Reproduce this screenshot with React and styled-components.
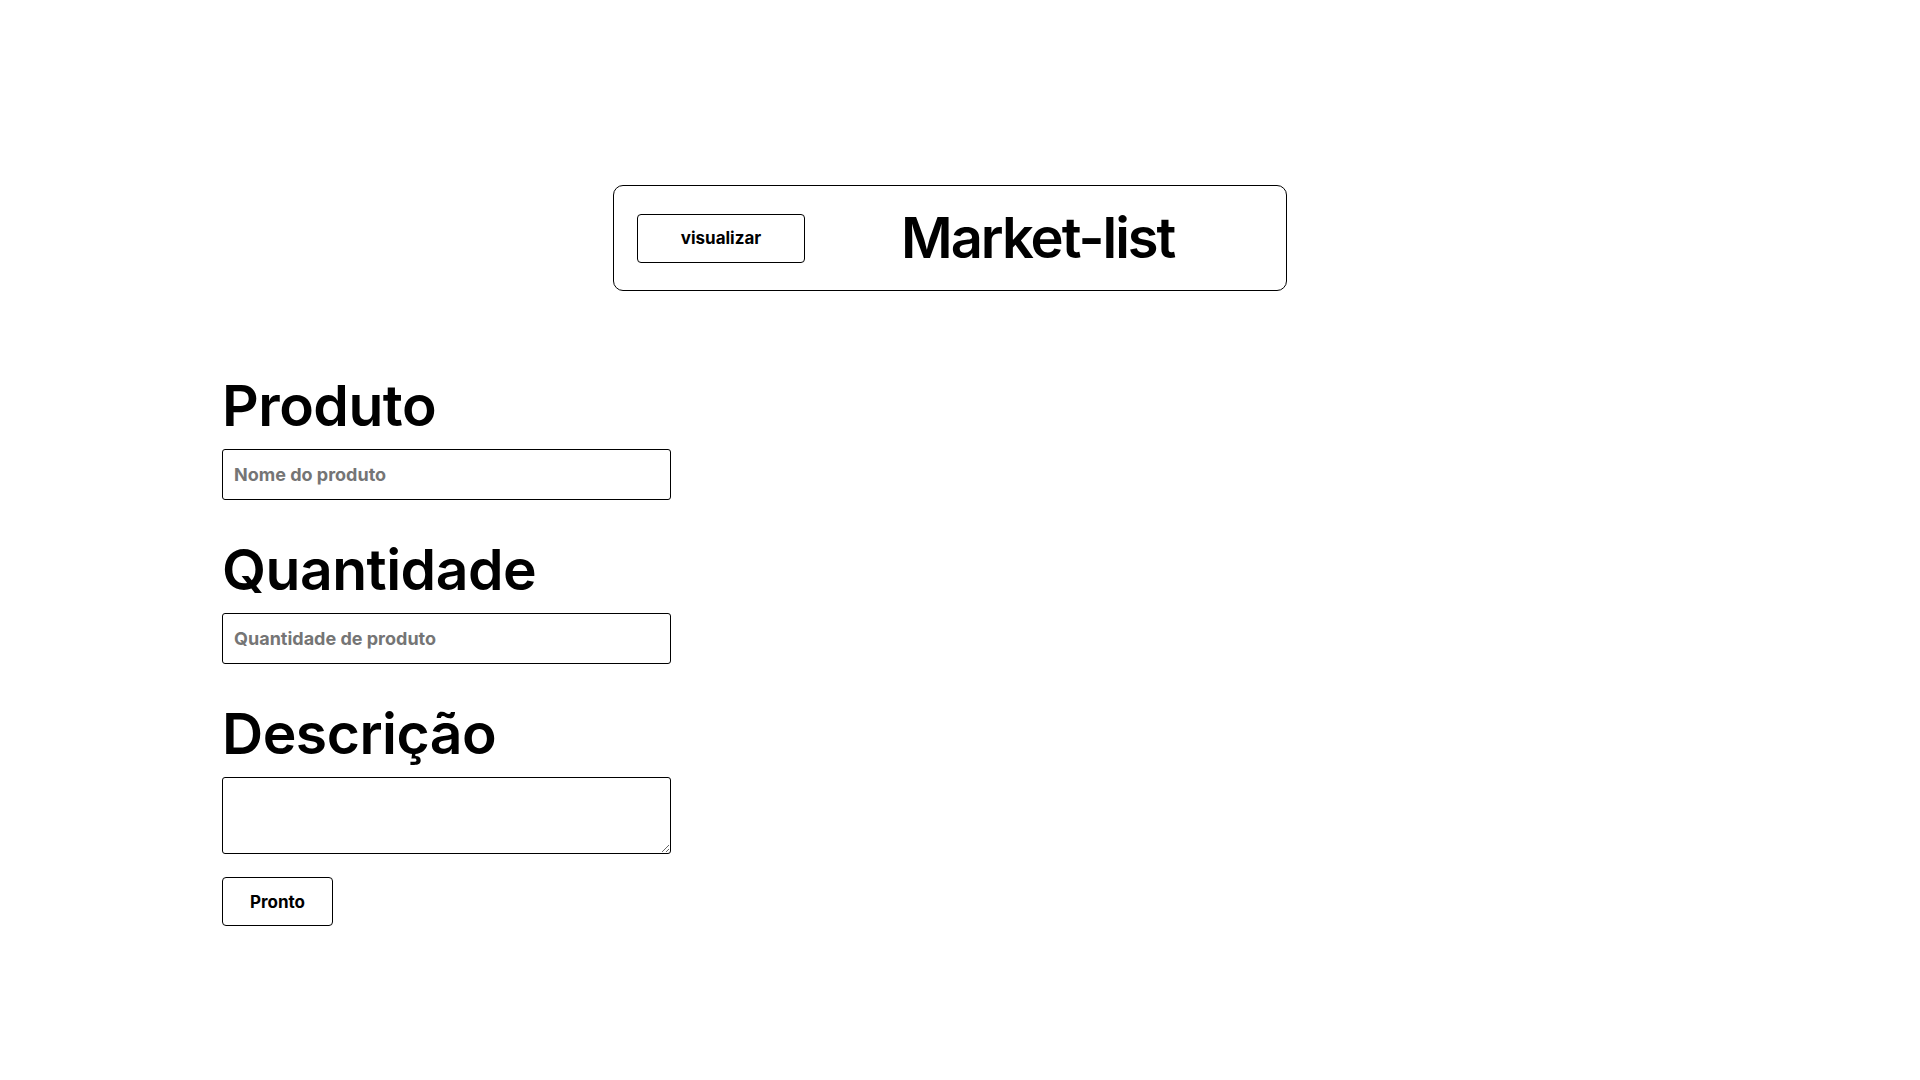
import styled, { createGlobalStyle } from 'styled-components';

const GlobalStyle = createGlobalStyle`
  body {
    margin: 0;
    font-family: Inter, "Noto Sans", sans-serif;
    color: #000;
    background: #fff;
  }
`;

const Page = styled.div`
  padding: 185px 20px 212px 0;
`;

const Header = styled.header`
  width: 674px;
  height: 106px;
  margin: 0 auto;
  box-sizing: border-box;
  border: 1px solid #000;
  border-radius: 10px;
  display: flex;
  align-items: center;
  padding: 0 23px;
  gap: 96px;
`;

const Button = styled.button`
  width: ${(p) => p.$width || 'auto'};
  height: 49px;
  box-sizing: border-box;
  background: #fff;
  border: 1px solid #000;
  border-radius: 4px;
  font-family: Inter, sans-serif;
  font-size: 17px;
  font-weight: 700;
  color: #000;
  cursor: pointer;
`;

const Title = styled.h1`
  margin: 0;
  font-size: 56px;
  font-weight: 600;
  letter-spacing: -2px;
  line-height: 1;
`;

const Form = styled.form`
  margin: 86px 0 0 222px;
  display: flex;
  flex-direction: column;
  align-items: flex-start;
`;

const Field = styled.div`
  display: flex;
  flex-direction: column;
  gap: 14px;
  margin-bottom: ${(p) => p.$last ? '23px' : '41px'};
`;

const Label = styled.label`
  font-size: 57px;
  font-weight: 600;
  letter-spacing: -0.5px;
  line-height: 58px;
`;

const Input = styled.input`
  width: 449px;
  height: 51px;
  box-sizing: border-box;
  border: 1px solid #000;
  border-radius: 3px;
  padding: 0 11px;
  font-family: Inter, sans-serif;
  font-size: 18px;
  font-weight: 700;
  &::placeholder {
    color: #757575;
  }
`;

const TextArea = styled.textarea`
  width: 449px;
  height: 77px;
  box-sizing: border-box;
  border: 1px solid #000;
  border-radius: 3px;
  padding: 8px 11px;
  font-family: Inter, sans-serif;
  font-size: 18px;
`;

export default function App() {
  return (
    <Page>
      <GlobalStyle />
      <Header>
        <Button type="button" $width="168px">visualizar</Button>
        <Title>Market-list</Title>
      </Header>
      <Form onSubmit={(e) => e.preventDefault()}>
        <Field>
          <Label htmlFor="produto">Produto</Label>
          <Input id="produto" placeholder="Nome do produto" />
        </Field>
        <Field>
          <Label htmlFor="quantidade">Quantidade</Label>
          <Input id="quantidade" placeholder="Quantidade de produto" />
        </Field>
        <Field $last>
          <Label htmlFor="descricao">Descrição</Label>
          <TextArea id="descricao" />
        </Field>
        <Button type="submit" $width="111px">Pronto</Button>
      </Form>
    </Page>
  );
}
